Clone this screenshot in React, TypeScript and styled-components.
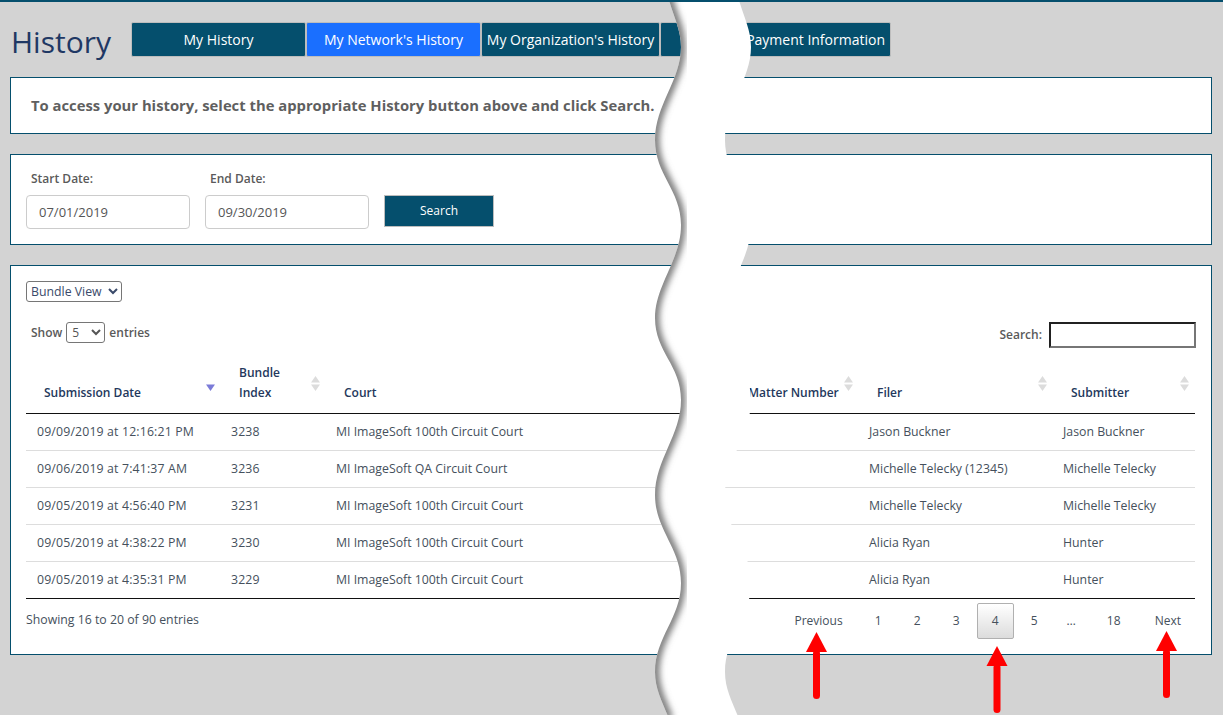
import styled, { createGlobalStyle } from 'styled-components';

const TEAL = '#054f6d';
const FONT = '"Open Sans", "Noto Sans", sans-serif';

const TABS = [
  { label: 'My History', width: 175 },
  { label: "My Network's History", width: 175, active: true },
  { label: "My Organization's History", width: 179 },
  { label: 'Payment Information', width: 231, end: true },
];

const COLUMNS = [
  { label: 'Submission Date', width: 195, sorted: true },
  { label: 'Bundle Index', width: 105, narrow: true },
  { label: 'Court', width: 404 },
  { label: 'Matter Number', width: 129 },
  { label: 'Filer', width: 194 },
  { label: 'Submitter', width: 142 },
];

const ROWS = [
  ['09/09/2019 at 12:16:21 PM', '3238', 'MI ImageSoft 100th Circuit Court', '', 'Jason Buckner', 'Jason Buckner'],
  ['09/06/2019 at 7:41:37 AM', '3236', 'MI ImageSoft QA Circuit Court', '', 'Michelle Telecky (12345)', 'Michelle Telecky'],
  ['09/05/2019 at 4:56:40 PM', '3231', 'MI ImageSoft 100th Circuit Court', '', 'Michelle Telecky', 'Michelle Telecky'],
  ['09/05/2019 at 4:38:22 PM', '3230', 'MI ImageSoft 100th Circuit Court', '', 'Alicia Ryan', 'Hunter'],
  ['09/05/2019 at 4:35:31 PM', '3229', 'MI ImageSoft 100th Circuit Court', '', 'Alicia Ryan', 'Hunter'],
];

const PAGES = ['1', '2', '3', '4', '5', '…', '18'];

const WAVE_LEFT =
  'M668 -4 C672 14 681 28 681 47 C681 80 655 105 655 140 C655 175 681 190 681 225 C681 260 655 285 655 318 C655 352 681 365 681 400 C681 435 655 460 655 495 C655 530 681 548 681 583 C681 618 655 637 655 672 C655 690 663 703 669 719';
const WAVE_RIGHT =
  'L739 719 C733 703 725 690 725 672 C725 637 751 618 751 583 C751 548 725 530 725 495 C725 460 751 435 751 400 C751 365 725 352 725 318 C725 285 751 260 751 225 C751 190 725 175 725 140 C725 105 751 80 751 47 C751 28 742 14 738 -4 Z';

const GlobalStyle = createGlobalStyle`
  html, body {
    margin: 0;
    background: #d3d3d3;
  }
  body {
    font-family: ${FONT};
    font-size: 12px;
    color: #45505c;
  }
`;

function SortIcon({ active }: { active?: boolean }) {
  return (
    <SortMark viewBox="0 0 9 15" width="9" height="15">
      {!active && <path d="M4.5 0 L9 6.5 H0 Z" fill="#dcdcdc" />}
      <path d="M0 8.5 H9 L4.5 15 Z" fill={active ? '#7b7bd8' : '#dcdcdc'} />
    </SortMark>
  );
}

function Arrow({ x, y }: { x: number; y: number }) {
  return (
    <g fill="#ff0000">
      <path d={`M${x} ${y} L${x + 10.5} ${y + 20} H${x - 10.5} Z`} />
      <rect x={x - 3.5} y={y + 18} width="7" height={49} rx="3.5" />
    </g>
  );
}

export default function App() {
  return (
    <Page>
      <GlobalStyle />
      <Header>
        <Title>History</Title>
        <Tabs>
          {TABS.map((tab) => (
            <Tab key={tab.label} $width={tab.width} $active={tab.active} $end={tab.end}>
              {tab.label}
            </Tab>
          ))}
        </Tabs>
      </Header>

      <Notice>To access your history, select the appropriate History button above and click Search.</Notice>

      <SearchPanel>
        <Field>
          <FieldLabel>Start Date:</FieldLabel>
          <DateInput readOnly value="07/01/2019" />
        </Field>
        <Field>
          <FieldLabel>End Date:</FieldLabel>
          <DateInput readOnly value="09/30/2019" />
        </Field>
        <SearchButton>Search</SearchButton>
      </SearchPanel>

      <TablePanel>
        <ViewSelect defaultValue="Bundle View">
          <option>Bundle View</option>
        </ViewSelect>
        <TableTools>
          <Length>
            Show
            <LengthSelect defaultValue="5">
              <option>5</option>
            </LengthSelect>
            entries
          </Length>
          <Filter>
            <FilterLabel>Search:</FilterLabel>
            <FilterInput />
          </Filter>
        </TableTools>
        <Table>
          <colgroup>
            {COLUMNS.map((col) => (
              <col key={col.label} width={col.width} />
            ))}
          </colgroup>
          <thead>
            <tr>
              {COLUMNS.map((col) => (
                <HeadCell key={col.label}>
                  {col.narrow ? (
                    <>
                      Bundle
                      <br />
                      Index
                    </>
                  ) : (
                    col.label
                  )}
                  <SortIcon active={col.sorted} />
                </HeadCell>
              ))}
            </tr>
          </thead>
          <tbody>
            {ROWS.map((row) => (
              <tr key={row[1]}>
                {row.map((cell, i) => (
                  <Cell key={i} $numeric={i < 2}>
                    {cell}
                  </Cell>
                ))}
              </tr>
            ))}
          </tbody>
        </Table>
        <TableFooter>
          <Info>Showing 16 to 20 of 90 entries</Info>
          <Pagination>
            <PageButton>Previous</PageButton>
            {PAGES.map((page) => (
              <PageButton key={page} $current={page === '4'} $width={page === '…' ? 33 : page === '18' ? 48 : undefined}>
                {page}
              </PageButton>
            ))}
            <PageButton>Next</PageButton>
          </Pagination>
        </TableFooter>
      </TablePanel>

      <Overlay viewBox="0 0 1223 715" width="1223" height="715">
        <defs>
          <clipPath id="tear">
            <path d={`${WAVE_LEFT} ${WAVE_RIGHT}`} />
          </clipPath>
          <filter id="soft" x="-20%" y="-5%" width="140%" height="110%">
            <feGaussianBlur stdDeviation="3" />
          </filter>
        </defs>
        <path d={`${WAVE_LEFT} ${WAVE_RIGHT}`} fill="#fff" />
        <g clipPath="url(#tear)">
          <path d={WAVE_LEFT} fill="none" stroke="#7a7a7a" strokeWidth="9" filter="url(#soft)" />
        </g>
        <Arrow x={816.5} y={632} />
        <Arrow x={997} y={646} />
        <Arrow x={1166.5} y={631} />
      </Overlay>
    </Page>
  );
}

const Page = styled.div`
  position: relative;
  width: 1223px;
  height: 715px;
  overflow: hidden;
  border-top: 2px solid ${TEAL};
  box-sizing: border-box;
`;

const Header = styled.div`
  display: flex;
  align-items: center;
  height: 35px;
  margin: 20px 0 20px 11px;
`;

const Title = styled.h1`
  width: 120px;
  margin: 0;
  padding-top: 4px;
  font-size: 30px;
  font-weight: 400;
  color: #1f3864;
  white-space: nowrap;
`;

const Tabs = styled.div`
  display: flex;
`;

const Tab = styled.div<{ $width: number; $active?: boolean; $end?: boolean }>`
  display: flex;
  align-items: center;
  justify-content: ${(p) => (p.$end ? 'flex-end' : 'center')};
  box-sizing: border-box;
  width: ${(p) => p.$width}px;
  height: 35px;
  padding: 0 5px;
  border: 1px solid #bdbdbd;
  border-radius: 2px;
  background: ${(p) => (p.$active ? '#1a6fff' : TEAL)};
  color: #fff;
  font-size: 14px;
  white-space: nowrap;
`;

const Panel = styled.div`
  box-sizing: border-box;
  width: 1202px;
  margin: 0 0 20px 10px;
  border: 1px solid ${TEAL};
  background: #fff;
`;

const Notice = styled(Panel)`
  display: flex;
  align-items: center;
  height: 57px;
  padding: 0 0 2px 20px;
  font-size: 14.8px;
  font-weight: 700;
  color: #5f5f5f;
`;

const SearchPanel = styled(Panel)`
  display: flex;
  align-items: flex-start;
  gap: 15px;
  height: 91px;
  padding: 15px 15px 0;
`;

const Field = styled.div`
  display: flex;
  flex-direction: column;
  gap: 8px;
`;

const FieldLabel = styled.div`
  height: 17px;
  padding-left: 5px;
  font-weight: 600;
  line-height: 17px;
  color: #5a5a5a;
`;

const DateInput = styled.input`
  box-sizing: border-box;
  width: 164px;
  height: 34px;
  padding: 0 12px;
  border: 1px solid #ccc;
  border-radius: 4px;
  font-family: ${FONT};
  font-size: 13px;
  color: #555;
  outline: none;
`;

const SearchButton = styled.button`
  width: 110px;
  height: 32px;
  margin-top: 25px;
  padding: 0 0 2px;
  border: 1px solid #bdbdbd;
  background: ${TEAL};
  color: #fff;
  font-family: ${FONT};
  font-size: 12px;
`;

const TablePanel = styled(Panel)`
  height: 390px;
  padding: 15px 15px 0;
`;

const ViewSelect = styled.select`
  display: block;
  width: 96px;
  height: 21px;
  padding: 0;
  border: 1px solid #767676;
  border-radius: 3px;
  background: #fff;
  font-family: ${FONT};
  font-size: 12.3px;
  color: #3a4a6a;
`;

const TableTools = styled.div`
  display: flex;
  align-items: center;
  justify-content: space-between;
  height: 26px;
  margin-top: 20px;
`;

const Length = styled.label`
  display: flex;
  align-items: center;
  gap: 4px;
  margin-top: -5px;
  padding-left: 5px;
  font-weight: 600;
  color: #5a5a5a;
`;

const LengthSelect = styled.select`
  width: 39px;
  height: 21px;
  padding: 0 0 0 1px;
  border: 1px solid #767676;
  border-radius: 3px;
  background: #fff;
  font-family: ${FONT};
  font-size: 12px;
  color: #555;
`;

const Filter = styled.label`
  display: flex;
  align-items: center;
  gap: 7px;
  font-weight: 600;
  color: #5a5a5a;
`;

const FilterLabel = styled.span`
  padding-bottom: 2px;
`;

const FilterInput = styled.input`
  box-sizing: border-box;
  width: 147px;
  height: 26px;
  border: 2px inset #767676;
  background: #fff;
  outline: none;
`;

const Table = styled.table`
  table-layout: fixed;
  width: 1169px;
  margin-top: 4px;
  border-collapse: collapse;
  border-bottom: 1px solid #111;
`;

const HeadCell = styled.th`
  position: relative;
  height: 51px;
  padding: 0 18px 10px;
  border-bottom: 1px solid #111;
  vertical-align: bottom;
  text-align: left;
  font-weight: 600;
  line-height: 20px;
  color: #24385c;
  white-space: nowrap;
`;

const SortMark = styled.svg`
  position: absolute;
  top: 24px;
  right: 6px;
`;

const Cell = styled.td<{ $numeric?: boolean }>`
  box-sizing: border-box;
  height: 37px;
  padding: 0 10px 2px;
  border-top: 1px solid #ddd;
  font-size: 12.3px;
  letter-spacing: ${(p) => (p.$numeric ? '0.15px' : '0')};
  color: #45505c;
  white-space: nowrap;
  tr:first-child > & {
    border-top: 0;
  }
  &:first-child {
    padding-left: 11px;
  }
`;

const TableFooter = styled.div`
  display: flex;
  align-items: flex-start;
  justify-content: space-between;
  width: 1170px;
  margin-top: 4px;
`;

const Info = styled.div`
  margin-top: 8px;
  font-size: 12.3px;
  line-height: 17px;
`;

const Pagination = styled.div`
  display: flex;
  gap: 2px;
`;

const PageButton = styled.div<{ $current?: boolean; $width?: number }>`
  display: flex;
  align-items: center;
  justify-content: center;
  box-sizing: border-box;
  min-width: ${(p) => p.$width ?? 37}px;
  height: 36px;
  padding: ${(p) => (p.$width ? '0 0 2px' : '0 14px 2px')};
  border: 1px solid ${(p) => (p.$current ? '#b0b0b0' : 'transparent')};
  border-radius: 2px;
  background: ${(p) => (p.$current ? 'linear-gradient(#fff, #dcdcdc)' : 'transparent')};
  color: #45505c;
`;

const Overlay = styled.svg`
  position: absolute;
  top: -2px;
  left: 0;
  pointer-events: none;
`;
